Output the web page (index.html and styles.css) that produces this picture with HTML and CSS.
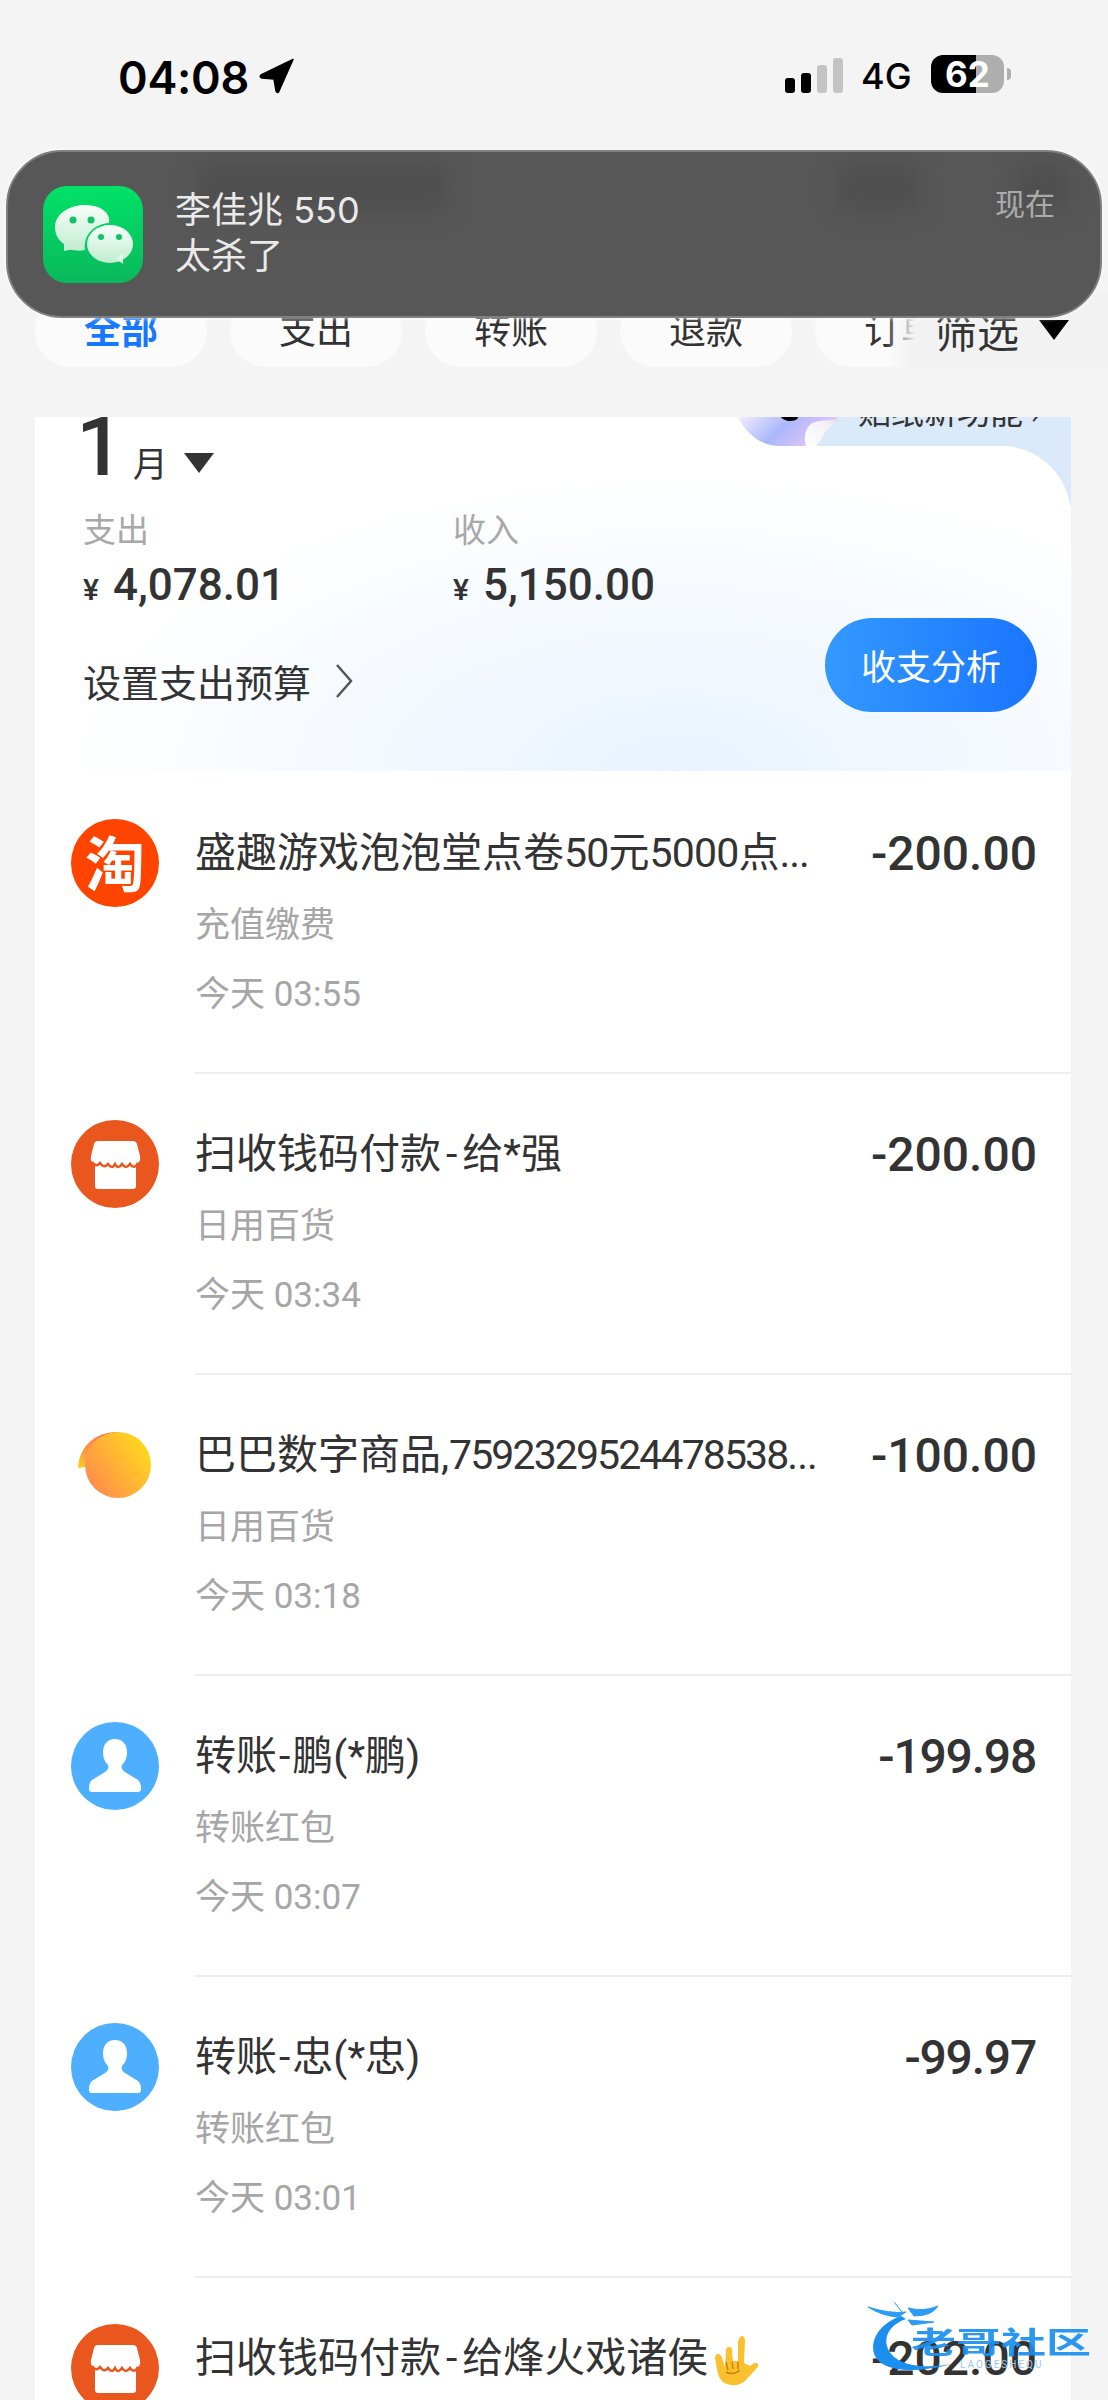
FILE: index.html
```html
<!DOCTYPE html>
<html lang="zh">
<head>
<meta charset="utf-8">
<title>账单</title>
<link rel="stylesheet" href="styles.css">
</head>
<body>
<div class="page">
  <header class="status">
    <div class="status-left">
      <span class="clock">04:08</span>
      <svg class="loc" viewBox="0 0 36 36"><path d="M34 1.500 L2 17 Q0 19 3 20 L15 21 L17 33 Q19 36 20 33 Z" fill="#000" stroke="#000" stroke-width="1.500" stroke-linejoin="round"/></svg>
    </div>
    <div class="status-right">
      <div class="signal"><i class="bar b1"></i><i class="bar b2"></i><i class="bar b3"></i><i class="bar b4"></i></div>
      <span class="net">4G</span>
      <div class="battery"><span class="batt-num">62</span></div>
      <i class="nub"></i>
    </div>
  </header>

  <div class="tabs-wrap">
    <nav class="tabs">
      <span class="tab active">全部</span>
      <span class="tab">支出</span>
      <span class="tab">转账</span>
      <span class="tab">退款</span>
      <span class="tab">订单</span>
    </nav>
    <div class="filter"><span>筛选</span><i class="filter-tri"></i></div>
  </div>

  <main class="card">
    <div class="banner">
      <svg class="sticker" viewBox="0 0 110 40">
        <defs>
          <linearGradient id="stk" x1="0" y1="0" x2="1" y2="0.300">
            <stop offset="0" stop-color="#f3eefc"/><stop offset="0.500" stop-color="#aab8fb"/><stop offset="1" stop-color="#e9c6fb"/>
          </linearGradient>
          <linearGradient id="curl" x1="0" y1="1" x2="1" y2="0">
            <stop offset="0" stop-color="#ffffff"/><stop offset="0.700" stop-color="#f2f2f6"/><stop offset="1" stop-color="#d8d8e4"/>
          </linearGradient>
        </defs>
        <path d="M0 0 H100 L70 29 H42 C22 29 8 16 0 0Z" fill="url(#stk)"/>
        <path d="M43 0 H60 Q60 4 51 4 Q45 3 43 0Z" fill="#000"/>
        <path d="M68 29 Q64 14 74 6 Q86 2 106 3 Q94 6 88 14 Q82 24 78 29Z" fill="url(#curl)"/>
      </svg>
      <span class="banner-text">贴纸新功能 ›</span>
    </div>
    <section class="summary">
      <div class="month">
        <span class="month-num">1</span>
        <span class="month-unit">月</span>
        <i class="month-tri"></i>
      </div>
      <div class="totals">
        <div class="total">
          <div class="total-label">支出</div>
          <div class="total-val"><span class="yen">¥</span>4,078.01</div>
        </div>
        <div class="total">
          <div class="total-label">收入</div>
          <div class="total-val"><span class="yen">¥</span>5,150.00</div>
        </div>
      </div>
      <div class="actions">
        <div class="budget">设置支出预算
          <svg class="chev" viewBox="0 0 20 36"><path d="M3 2 L17 18 L3 34" fill="none" stroke="#555" stroke-width="2.500"/></svg>
        </div>
        <div class="analyze">收支分析</div>
      </div>
    </section>

    <section class="list">
      <article class="row">
        <div class="ico ico-tb"><span>淘</span></div>
        <div class="row-body">
          <div class="row-main">
            <div class="row-title">盛趣游戏泡泡堂点卷<span class="num">50</span>元<span class="num">5000</span>点<span class="dots">...</span></div>
            <div class="row-sub">充值缴费</div>
            <div class="row-time">今天 03:55</div>
          </div>
          <div class="row-amt">-200.00</div>
        </div>
      </article>

      <article class="row">
        <svg class="ico" viewBox="0 0 88 88"><circle cx="44" cy="44" r="44" fill="#e9571f"/><path d="M27 21 H62 Q65 21 66 24 L69 36 Q70 42 66 43 H65 V66 Q65 69 62 69 H27 Q24 69 24 66 V43 H23 Q19 42 20 36 L23 24 Q24 21 27 21Z" fill="#fff"/><path d="M21 42 q4 6 8 1 q4 6 8 1 q4 6 7 0 q3 6 7 0 q4 6 8 0 q4 6 8 -1" fill="none" stroke="#e9571f" stroke-width="2.500"/></svg>
        <div class="row-body">
          <div class="row-main">
            <div class="row-title">扫收钱码付款<span class="hy">-</span>给*强</div>
            <div class="row-sub">日用百货</div>
            <div class="row-time">今天 03:34</div>
          </div>
          <div class="row-amt">-200.00</div>
        </div>
      </article>

      <article class="row">
        <svg class="ico" viewBox="0 0 88 88">
          <defs>
            <linearGradient id="bub" x1="1" y1="0.200" x2="0" y2="0.900"><stop offset="0.100" stop-color="#ffd420"/><stop offset="1" stop-color="#ff8452"/></linearGradient>
            <linearGradient id="cres" x1="1" y1="0" x2="0" y2="1"><stop offset="0" stop-color="#f66a5a"/><stop offset="0.700" stop-color="#fb9c3e"/><stop offset="1" stop-color="#ffd020"/></linearGradient>
          </defs>
          <path d="M7 47 C8 24 26 10 48 11 L30 40 L16 45 Q10 47 7 47Z" fill="url(#cres)"/>
          <circle cx="47" cy="44" r="33" fill="url(#bub)"/>
        </svg>
        <div class="row-body">
          <div class="row-main">
            <div class="row-title">巴巴数字商品,<span class="long">7592329524478538</span><span class="dots">...</span></div>
            <div class="row-sub">日用百货</div>
            <div class="row-time">今天 03:18</div>
          </div>
          <div class="row-amt">-100.00</div>
        </div>
      </article>

      <article class="row">
        <svg class="ico" viewBox="0 0 88 88"><circle cx="44" cy="44" r="44" fill="#4eaeff"/><path d="M44 17 C52 17 56 23 56 30 C56 36 54 40 51 43 C50 46 51 48 54 50 L67 58 C69 60 70 62 70 67 Q70 70 67 70 H21 Q18 70 18 67 C18 62 19 60 21 58 L34 50 C37 48 38 46 37 43 C34 40 32 36 32 30 C32 23 36 17 44 17Z" fill="#fff"/></svg>
        <div class="row-body">
          <div class="row-main">
            <div class="row-title">转账<span class="hy-s">-</span>鹏(*鹏)</div>
            <div class="row-sub">转账红包</div>
            <div class="row-time">今天 03:07</div>
          </div>
          <div class="row-amt tight">-199.98</div>
        </div>
      </article>

      <article class="row">
        <svg class="ico" viewBox="0 0 88 88"><circle cx="44" cy="44" r="44" fill="#4eaeff"/><path d="M44 17 C52 17 56 23 56 30 C56 36 54 40 51 43 C50 46 51 48 54 50 L67 58 C69 60 70 62 70 67 Q70 70 67 70 H21 Q18 70 18 67 C18 62 19 60 21 58 L34 50 C37 48 38 46 37 43 C34 40 32 36 32 30 C32 23 36 17 44 17Z" fill="#fff"/></svg>
        <div class="row-body">
          <div class="row-main">
            <div class="row-title">转账<span class="hy-s">-</span>忠(*忠)</div>
            <div class="row-sub">转账红包</div>
            <div class="row-time">今天 03:01</div>
          </div>
          <div class="row-amt tight">-99.97</div>
        </div>
      </article>

      <article class="row">
        <svg class="ico" viewBox="0 0 88 88"><circle cx="44" cy="44" r="44" fill="#e9571f"/><path d="M27 21 H62 Q65 21 66 24 L69 36 Q70 42 66 43 H65 V66 Q65 69 62 69 H27 Q24 69 24 66 V43 H23 Q19 42 20 36 L23 24 Q24 21 27 21Z" fill="#fff"/><path d="M21 42 q4 6 8 1 q4 6 8 1 q4 6 7 0 q3 6 7 0 q4 6 8 0 q4 6 8 -1" fill="none" stroke="#e9571f" stroke-width="2.500"/></svg>
        <div class="row-body">
          <div class="row-main">
            <div class="row-title">扫收钱码付款<span class="hy">-</span>给烽火戏诸侯<svg class="emoji" viewBox="0 0 50 50">
              <path d="M6 22 Q6 18 9 18 Q12 18 13 22 L16 31 L17 14 Q18 10 21 11 Q24 12 23 16 L24 25 L29 25 L29 6 Q30 1 33 0 Q36 0 36 5 L35 27 L41 30 Q46 26 48 27 Q51 29 47 33 L36 45 Q30 50 22 49 Q12 48 9 38 Z" fill="#fbc02d"/>
              <path d="M17 26 L19 34 M23 26 L24 33 M29 26 L29 33 M17 36 Q24 40 31 34" fill="none" stroke="#c98300" stroke-width="1.500"/>
            </svg></div>
          </div>
          <div class="row-amt">-202.00</div>
        </div>
      </article>
    </section>
  </main>

  <aside class="notice">
    <i class="smudge s1"></i><i class="smudge s2"></i><i class="smudge s3"></i>
    <svg class="wx" viewBox="0 0 100 97">
      <defs>
        <linearGradient id="wxbg" x1="0" y1="0" x2="0" y2="1"><stop offset="0" stop-color="#00e268"/><stop offset="1" stop-color="#0ab85c"/></linearGradient>
        <linearGradient id="wxb" x1="0" y1="0" x2="0" y2="1"><stop offset="0" stop-color="#f8fdf9"/><stop offset="1" stop-color="#bfeed0"/></linearGradient>
      </defs>
      <rect x="0" y="0" width="100" height="97" rx="24" fill="url(#wxbg)"/>
      <path d="M42 19 C59 19 68 28 66 37 C52 38 40 48 42 64 C34 66 29 63 26 64 L21 65 L21 58 C15 54 12 48 12 41 C12 29 25 19 42 19Z" fill="url(#wxb)"/>
      <ellipse cx="67" cy="58" rx="23" ry="19" fill="url(#wxb)"/>
      <path d="M73 73 L80 78 L80 68Z" fill="url(#wxb)"/>
      <circle cx="30" cy="34" r="3.500" fill="#12c268"/><circle cx="48" cy="34" r="3.500" fill="#12c268"/>
      <circle cx="58" cy="51" r="3" fill="#12c268"/><circle cx="76" cy="51" r="3" fill="#12c268"/>
    </svg>
    <div class="notice-text">
      <div class="notice-title">李佳兆 550</div>
      <div class="notice-msg">太杀了</div>
    </div>
    <div class="notice-time">现在</div>
  </aside>

  <aside class="mark">
    <svg class="mark-logo" viewBox="0 0 90 75">
      <path d="M33 14 C10 22 1 40 7 54 C14 68 40 73 84 62 C50 68 24 62 19 44 C16 32 24 22 38 17Z" fill="#1b8ff0"/>
      <path d="M0 5 Q22 12 38 10 L30 15 Q14 14 0 5Z M26 0 L34 10 M40 6 Q56 10 70 4 Q64 14 46 14Z M40 18 L66 20 L44 23Z" fill="#2c9bf3" stroke="#2c9bf3" stroke-width="1"/>
    </svg>
    <span class="mark-name">老哥社区</span>
    <span class="mark-sub">LAOGESHEQU</span>
  </aside>
</div>
</body>
</html>
```
FILE: styles.css
```css
* { box-sizing: border-box; margin: 0; padding: 0; }
html, body { background: #f4f4f4; }
body { font-family: Roboto, "Noto Sans CJK SC", sans-serif; color: #333; }
i { display: block; font-style: normal; }
.page { position: relative; width: 1108px; height: 2400px; overflow: hidden; background: #f4f4f4; }

/* status bar */
.status { height: 150px; padding: 55px 97px 0 118px; display: flex; justify-content: space-between; align-items: flex-start; }
.status-left { display: flex; align-items: flex-start; gap: 10px; height: 38px; }
.clock { margin-top: 4px; font-family: Inter, sans-serif; font-weight: 600; font-size: 45px; line-height: 38px; color: #000; letter-spacing: -0.3px; }
.loc { width: 36px; height: 36px; margin-top: 3px; }
.status-right { display: flex; align-items: center; height: 38px; }
.signal { display: flex; align-items: flex-end; gap: 6px; height: 35px; margin-top: 2px; }
.bar { width: 10px; border-radius: 3px; background: #000; }
.b1 { height: 15px; }
.b2 { height: 20px; }
.b3 { height: 28px; background: #c4c4c4; }
.b4 { height: 35px; background: #c4c4c4; }
.net { font-family: Inter, sans-serif; font-weight: 500; font-size: 36px; line-height: 38px; color: #000; margin: 3px 0 0 18px; width: 70px; }
.battery { width: 73px; height: 38px; border-radius: 12px; background: linear-gradient(90deg, #000 0 62%, #aeaeae 62% 100%); text-align: center; }
.batt-num { font-family: Inter, sans-serif; font-weight: 700; font-size: 35px; line-height: 38px; color: #fff; }
.nub { width: 4px; height: 12px; margin-left: 3px; border-radius: 0 4px 4px 0; background: #aeaeae; }

/* tabs */
.tabs-wrap { position: relative; height: 74px; margin-top: 143px; overflow: hidden; }
.tabs { display: flex; gap: 23px; padding-left: 35px; }
.tab { flex: 0 0 172px; height: 74px; border-radius: 36px; background: #fbfbfb; font-family: "Noto Sans CJK SC", sans-serif; font-size: 37px; line-height: 70px; text-align: center; color: #333; }
.tab.active { color: #1677ff; font-weight: 700; }
.filter { position: absolute; top: 0; right: 0; bottom: 0; width: 223px; display: flex; align-items: center; padding-left: 50px; background: linear-gradient(90deg, rgba(243,243,243,0) 0, #f2f2f2 30px); font-family: "Noto Sans CJK SC", sans-serif; font-size: 42px; line-height: 74px; color: #333; }
.filter-tri { width: 0; height: 0; margin-left: 20px; border-left: 15px solid transparent; border-right: 15px solid transparent; border-top: 20px solid #000; }

/* card */
.card { position: relative; margin: 50px 37px 0 35px; height: 2000px; overflow: hidden; background: #fff; }
.banner { position: absolute; top: 0; right: 0; width: 333px; height: 90px; background: linear-gradient(90deg, transparent 50px, #dbeafa 50px); }
.sticker { position: absolute; left: 0; top: 0; width: 110px; height: 40px; }
.banner-text { position: absolute; left: 120px; top: -27px; font-family: "Noto Sans CJK SC", sans-serif; font-size: 33px; line-height: 40px; color: #333; white-space: nowrap; }
.summary { position: relative; margin-top: 29px; height: 325px; border-top-right-radius: 70px 70px; padding: 0 34px 0 48px; background: radial-gradient(ellipse 620px 300px at 62% 100%, #e9f3fe 0, #f4f9ff 50%, #fff 100%); background-color: #fff; }
.month { display: flex; align-items: flex-start; height: 30px; }
.month-num { margin: -14px 0 0 -7px; font-family: Roboto, sans-serif; font-weight: 500; font-size: 84px; line-height: 30px; color: #333; }
.month-unit { margin: 1px 0 0 9px; font-family: "Noto Sans CJK SC", sans-serif; font-size: 35px; line-height: 30px; color: #333; }
.month-tri { width: 0; height: 0; margin: 7px 0 0 16px; border-left: 15px solid transparent; border-right: 15px solid transparent; border-top: 20px solid #333; }
.totals { display: flex; margin-top: 32px; }
.total { width: 370px; }
.total-label { font-family: "Noto Sans CJK SC", sans-serif; font-size: 33px; line-height: 40px; color: #a8a8a8; }
.total-val { margin-top: 12px; font-family: Roboto, sans-serif; font-weight: 500; font-size: 44px; line-height: 50px; color: #333; white-space: nowrap; }
.yen { display: inline-block; width: 30px; font-size: 30px; }
.actions { display: flex; justify-content: space-between; margin-top: 3px; align-items: flex-start; }
.budget { display: flex; align-items: center; gap: 23px; height: 50px; margin-top: 38px; font-family: "Noto Sans CJK SC", sans-serif; font-size: 38px; line-height: 50px; color: #333; }
.chev { width: 20px; height: 36px; }
.analyze { width: 212px; height: 94px; border-radius: 47px; background: linear-gradient(90deg, #3399ff, #1a75ff); color: #fff; font-family: "Noto Sans CJK SC", sans-serif; font-size: 35px; line-height: 94px; text-align: center; }

/* rows */
.list { padding: 2px 0 0 36px; }
.row { display: flex; gap: 36px; height: 301px; }
.ico { flex: 0 0 88px; width: 88px; height: 88px; margin-top: 46px; }
.ico-tb { border-radius: 50%; background: #ff4400; color: #fff; font-family: "Noto Sans CJK SC", sans-serif; font-weight: 700; font-size: 60px; line-height: 84px; text-align: center; }
.row-body { flex: 1; display: flex; justify-content: space-between; padding: 55px 34px 0 0; border-bottom: 2px solid #eeeeee; }
.row-main { min-width: 0; }
.row-title { font-family: Roboto, "Noto Sans CJK SC", sans-serif; font-size: 41px; line-height: 50px; color: #333; white-space: nowrap; }
.num { letter-spacing: -0.8px; }
.long { letter-spacing: -1.9px; }
.dots { letter-spacing: -1px; }
.hy { padding: 0 5px; }
.hy-s { padding: 0 2px; }
.row-sub { margin-top: 19px; font-family: "Noto Sans CJK SC", sans-serif; font-size: 35px; line-height: 50px; color: #a6a6a6; }
.row-time { margin-top: 23px; font-family: Roboto, "Noto Sans CJK SC", sans-serif; font-size: 35px; line-height: 50px; color: #a6a6a6; }
.row-amt { margin-top: 1px; font-family: Roboto, sans-serif; font-weight: 500; font-size: 48px; line-height: 50px; color: #333; }
.row-amt.tight { letter-spacing: -1.2px; margin-right: 1px; }
.emoji { width: 50px; height: 50px; margin-left: 1px; vertical-align: middle; }

/* notification */
.notice { position: absolute; left: 6px; top: 150px; width: 1096px; height: 168px; display: flex; align-items: flex-start; overflow: hidden; border-radius: 56px; background: #575757; border: 2px solid #808080; box-shadow: 0 0 5px rgba(255,255,255,0.9); color: #eee; }
.smudge { position: absolute; top: 12px; height: 46px; background: #4f4f4f; filter: blur(10px); }
.s1 { left: 190px; width: 250px; }
.s2 { left: 830px; width: 80px; }
.s3 { left: 1010px; width: 50px; }
.wx { position: relative; flex: 0 0 100px; width: 100px; height: 97px; margin: 34px 0 0 35px; }
.notice-text { position: relative; margin: 36px 0 0 32px; font-family: "Noto Sans CJK SC", sans-serif; }
.notice-title { font-family: Inter, "Noto Sans CJK SC", sans-serif; font-weight: 400; font-size: 36px; line-height: 44px; color: #eaeaea; }
.notice-msg { font-size: 36px; line-height: 42px; color: #eaeaea; }
.notice-time { position: absolute; right: 45px; top: 30px; font-family: "Noto Sans CJK SC", sans-serif; font-size: 30px; line-height: 40px; color: #ababab; }

/* watermark */
.mark { position: absolute; left: 868px; top: 2302px; width: 230px; height: 75px; }
.mark-logo { position: absolute; left: 0; top: 0; width: 90px; height: 75px; }
.mark-name { position: absolute; left: 43px; top: 14px; font-family: "Noto Sans CJK SC", sans-serif; font-weight: 700; font-size: 45px; line-height: 50px; color: #1b8ff0; opacity: 0.92; white-space: nowrap; transform: scaleY(0.65); }
.mark-sub { position: absolute; left: 92px; top: 58px; font-family: Roboto, sans-serif; font-size: 10px; letter-spacing: 2px; line-height: 10px; color: #9cc8ec; white-space: nowrap; }
```
